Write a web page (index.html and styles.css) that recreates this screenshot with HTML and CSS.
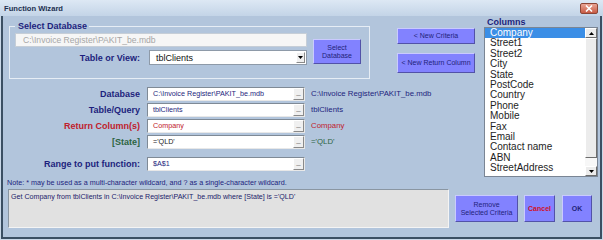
FILE: index.html
```html
<!DOCTYPE html>
<html lang="en">
<head>
    <meta charset="UTF-8">
    <title>Function Wizard</title>
    <link rel="stylesheet" href="styles.css">
</head>
<body>
    <div class="window">
        <div class="titlebar">
            <span class="title">Function Wizard</span>
            <span class="close">
                <svg width="8" height="7" viewBox="0 0 8 7"><path d="M1 0.5 L7 6.5 M7 0.5 L1 6.5" stroke="#fff" stroke-width="1.6"/></svg>
            </span>
        </div>
        <div class="client">
            <div class="upper">
                <div class="left">
                    <div class="top-row">
                        <fieldset class="frame">
                            <legend>Select Database</legend>
                            <div class="frame-body">
                                <div class="frame-fields">
                                    <div class="path-box">C:\Invoice Register\PAKIT_be.mdb</div>
                                    <div class="table-row">
                                        <span class="lbl">Table or View:</span>
                                        <div class="combo">
                                            <span>tblClients</span>
                                            <span class="drop"><svg width="5" height="3" viewBox="0 0 5 3"><path d="M0 0 H5 L2.5 3 Z" fill="#000"/></svg></span>
                                        </div>
                                    </div>
                                </div>
                                <button class="btn btn-select">Select<br>Database</button>
                            </div>
                        </fieldset>
                        <div class="criteria-btns">
                            <button class="btn btn-criteria">&lt; New Criteria</button>
                            <button class="btn btn-return">&lt; New Return Column</button>
                        </div>
                    </div>
                    <div class="fields">
                        <span class="field-lbl navy">Database</span>
                        <div class="box"><span class="navy">C:\Invoice Register\PAKIT_be.mdb</span><span class="dash">_</span></div>
                        <span class="side navy">C:\Invoice Register\PAKIT_be.mdb</span>

                        <span class="field-lbl navy">Table/Query</span>
                        <div class="box"><span class="navy">tblClients</span><span class="dash">_</span></div>
                        <span class="side navy">tblClients</span>

                        <span class="field-lbl red">Return Column(s)</span>
                        <div class="box"><span class="red">Company</span><span class="dash">_</span></div>
                        <span class="side red">Company</span>

                        <span class="field-lbl green">[State]</span>
                        <div class="box"><span class="dark">='QLD'</span><span class="dash">_</span></div>
                        <span class="side green">='QLD'</span>

                        <span class="field-lbl navy range">Range to put function:</span>
                        <div class="box range"><span class="navy">$A$1</span><span class="dash">_</span></div>
                        <span class="side range"></span>
                    </div>
                </div>
                <div class="columns">
                    <div class="col-title">Columns</div>
                    <div class="listbox">
                        <ul class="items">
                            <li class="sel">Company</li>
                            <li>Street1</li>
                            <li>Street2</li>
                            <li>City</li>
                            <li>State</li>
                            <li>PostCode</li>
                            <li>Country</li>
                            <li>Phone</li>
                            <li>Mobile</li>
                            <li>Fax</li>
                            <li>Email</li>
                            <li>Contact name</li>
                            <li>ABN</li>
                            <li>StreetAddress</li>
                        </ul>
                        <div class="vscroll">
                            <span class="arrow"><svg width="5" height="3" viewBox="0 0 5 3"><path d="M0 3 H5 L2.5 0 Z" fill="#000"/></svg></span>
                            <span class="thumb"></span>
                            <span class="track"></span>
                            <span class="arrow"><svg width="5" height="3" viewBox="0 0 5 3"><path d="M0 0 H5 L2.5 3 Z" fill="#000"/></svg></span>
                        </div>
                    </div>
                </div>
            </div>
            <div class="note">Note: * may be used as a multi-character wildcard, and ? as a single-character wildcard.</div>
            <div class="bottom">
                <div class="summary">Get Company from tblClients in C:\Invoice Register\PAKIT_be.mdb where [State] is ='QLD'</div>
                <button class="btn btn-remove">Remove<br>Selected Criteria</button>
                <button class="btn btn-cancel">Cancel</button>
                <button class="btn btn-ok">OK</button>
            </div>
        </div>
    </div>
</body>
</html>
```
FILE: styles.css
```css
*{
    box-sizing: border-box;
}

html, body{
    margin: 0;
    height: 100%;
}

body{
    font-family: "Liberation Sans", Arial, sans-serif;
    background-color: #b2c5dc;
}

.window{
    width: 603px;
    height: 240px;
    display: flex;
    flex-direction: column;
    background-color: #c9d8e8;
}

.titlebar{
    height: 16px;
    flex: none;
    display: flex;
    align-items: center;
    justify-content: space-between;
    padding: 0 5px 0 4px;
    background: linear-gradient(#dde8f4, #c3d4e7);
}

.title{
    font-size: 7.6px;
    font-weight: bold;
    color: #1e3050;
}

.close{
    width: 18px;
    height: 11px;
    border-radius: 2px;
    border: 1px solid #8d4636;
    background: linear-gradient(#eaa595, #c75a44);
    display: flex;
    align-items: center;
    justify-content: center;
}

.client{
    flex: 1;
    margin: 0 1px 1px;
    border: 2px solid #3b4f63;
    border-top: none;
    background-color: #b2c5dc;
    display: flex;
    flex-direction: column;
}

.upper{
    display: flex;
}

.left{
    width: 472px;
}

.top-row{
    display: flex;
    align-items: flex-start;
}

/* Select Database frame */
.frame{
    margin: 4px 0 0 6px;
    padding: 0 8px 13px 5px;
    width: 361px;
    min-width: 0;
    border: 1px solid #e6edf5;
}

.frame legend{
    font-size: 9px;
    font-weight: bold;
    line-height: 12px;
    color: #1d1f7d;
    padding: 0 2px 0 3px;
}

.frame-body{
    display: flex;
    align-items: flex-start;
    gap: 6px;
    padding-top: 1px;
}

.path-box{
    width: 292px;
    height: 14px;
    background-color: #f6f6f6;
    border: 1px solid #c6ced7;
    color: #a6a6a6;
    font-size: 8.6px;
    line-height: 12px;
    padding-left: 7px;
    white-space: nowrap;
}

.table-row{
    display: flex;
    align-items: center;
    justify-content: flex-end;
    gap: 9px;
    margin-top: 3px;
}

.lbl{
    font-size: 9px;
    font-weight: bold;
    color: #1d1f7d;
}

.combo{
    width: 158px;
    height: 15px;
    background-color: #fff;
    border: 1px solid #8e9aa8;
    display: flex;
    align-items: center;
    justify-content: space-between;
    font-size: 9px;
    padding: 0 1px 0 6px;
    color: #111;
}

.drop{
    width: 9px;
    height: 11px;
    background-color: #efefef;
    border: 1px solid;
    border-color: #fff #8a8a8a #8a8a8a #fff;
    display: flex;
    align-items: center;
    justify-content: center;
}

/* buttons */
.btn{
    font-family: inherit;
    font-size: 7px;
    line-height: 8px;
    color: #23237a;
    background-color: #8282ff;
    border: 1px solid;
    border-color: #cacaff #5252a8 #5252a8 #cacaff;
    padding: 0;
    margin: 0;
}

.btn-select{
    width: 49px;
    height: 25px;
    margin-top: 6px;
}

.criteria-btns{
    display: flex;
    flex-direction: column;
    margin: 12px 0 0 27px;
}

.btn-criteria{
    width: 78px;
    height: 16px;
}

.btn-return{
    width: 78px;
    height: 20px;
    margin-top: 9px;
}

/* criteria rows */
.fields{
    display: grid;
    grid-template-columns: 137px 158px 1fr;
    grid-auto-rows: 14px;
    column-gap: 7px;
    row-gap: 2px;
    margin-top: 8px;
}

.field-lbl{
    text-align: right;
    font-size: 9px;
    font-weight: bold;
    line-height: 14px;
    white-space: nowrap;
}

.range{
    margin-top: 6px;
}

.box{
    height: 14px;
    background-color: #fff;
    border: 1px solid;
    border-color: #7f8a96 #e8e8e8 #e8e8e8 #7f8a96;
    display: flex;
    justify-content: space-between;
    font-size: 7.2px;
    line-height: 12px;
    padding-left: 5px;
    white-space: nowrap;
}

.dash{
    width: 11px;
    background-color: #f0f0f0;
    border: 1px solid;
    border-color: #fff #8a8a8a #8a8a8a #fff;
    font-size: 8px;
    line-height: 7px;
    text-align: center;
    color: #000;
    font-weight: bold;
}

.side{
    font-size: 7.8px;
    line-height: 14px;
    margin-left: -1px;
    white-space: nowrap;
}

.navy{
    color: #1d1f7d;
}

.red{
    color: #c0202c;
}

.green{
    color: #2c6442;
}

.dark{
    color: #222;
}

/* Columns list */
.columns{
    width: 114px;
    margin-left: 9px;
}

.col-title{
    font-size: 9px;
    font-weight: bold;
    line-height: 10px;
    color: #1d1f7d;
    margin-top: 1px;
    padding-left: 3px;
}

.listbox{
    height: 150px;
    border: 1px solid #7a8594;
    background-color: #fff;
    display: flex;
    overflow: hidden;
}

.items{
    list-style: none;
    margin: 0;
    padding: 0;
    flex: 1;
    font-size: 10px;
    line-height: 10.4px;
    color: #1e1e1e;
}

.items li{
    padding-left: 5px;
    white-space: nowrap;
}

.items li.sel{
    background-color: #3b8ee6;
    color: #fff;
}

.vscroll{
    width: 12px;
    display: flex;
    flex-direction: column;
    background-color: #f7f7f7;
}

.arrow{
    height: 10px;
    flex: none;
    background-color: #ececec;
    border: 1px solid;
    border-color: #fff #6d6d6d #6d6d6d #fff;
    display: flex;
    align-items: center;
    justify-content: center;
}

.thumb{
    height: 120px;
    flex: none;
    background-color: #ececec;
    border: 1px solid;
    border-color: #fff #6d6d6d #6d6d6d #fff;
}

.track{
    flex: 1;
}

.note{
    font-size: 7.2px;
    line-height: 9px;
    color: #1d1f7d;
    margin: 1px 0 0 4px;
}

.bottom{
    display: flex;
    align-items: center;
    margin-top: 2px;
    padding-left: 5px;
}

.summary{
    width: 441px;
    height: 39px;
    background-color: #e1e1e1;
    border: 1px solid;
    border-color: #8a96a2 #f4f4f4 #f4f4f4 #8a96a2;
    font-size: 7.1px;
    padding: 3px 2px;
    color: #22226a;
    white-space: nowrap;
}

.btn-remove{
    width: 63px;
    height: 27px;
    margin-left: 6px;
}

.btn-cancel{
    width: 31px;
    height: 27px;
    margin-left: 6px;
    color: #d0102a;
    font-weight: bold;
}

.btn-ok{
    width: 30px;
    height: 27px;
    margin-left: 7px;
    font-weight: bold;
}
```
